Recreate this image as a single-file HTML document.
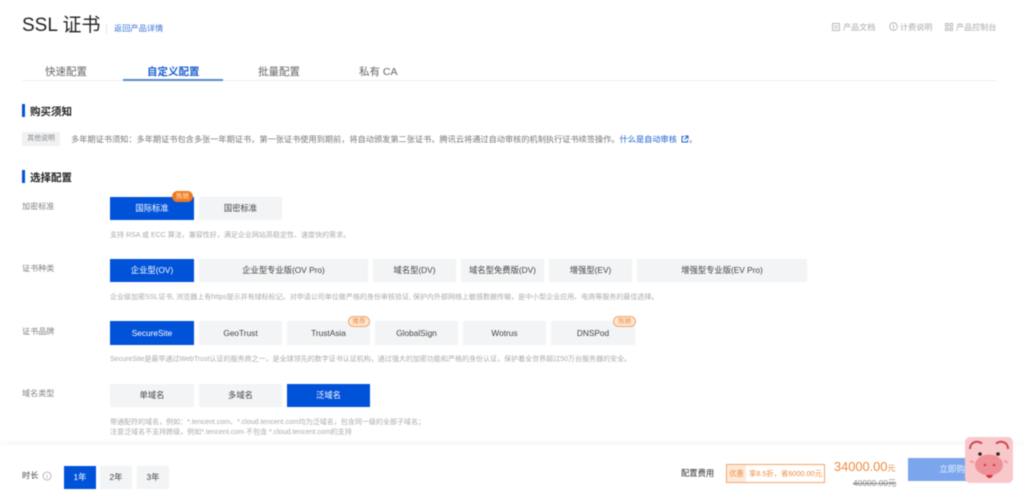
<!DOCTYPE html>
<html lang="zh"><head><meta charset="utf-8"><title>SSL 证书</title>
<style>
html,body{margin:0;padding:0;background:#fff}
#p{position:relative;width:1024px;height:495px;overflow:hidden;background:#fff;font-family:"Liberation Sans","Noto Sans CJK SC",sans-serif;color:#333}
#c{position:absolute;left:0;top:0;width:1024px;height:495px;filter:blur(.45px)}
.a{position:absolute;white-space:nowrap}
.b{position:absolute;height:23px;line-height:23px;text-align:center;background:#f2f4f5;color:#444;font-size:8.3px}
.on{background:#0052d9;color:#fff}
.l{position:absolute;left:22px;font-size:8.1px;color:#808080;white-space:nowrap;line-height:12px}
.h{position:absolute;left:110px;font-size:7.03px;color:#aaa;white-space:nowrap;line-height:10px}
.s{position:absolute;left:22px;width:2.5px;height:13px;background:#0052d9}
.t{position:absolute;left:30px;font-size:10.5px;font-weight:bold;color:#222;line-height:14px;white-space:nowrap}
.tab{position:absolute;top:65px;font-size:10.5px;color:#666;line-height:14px;white-space:nowrap}
.bd{position:absolute;width:21px;height:11px;border-radius:6px;line-height:11px;text-align:center;font-size:6.5px;box-sizing:border-box}
.top{position:absolute;top:23px;font-size:8.1px;color:#aaa;line-height:10px;white-space:nowrap}
</style></head><body><div id="p"><div id="c">
<div class="a" style="left:22px;top:13px;font-size:19px;line-height:26px;color:#222">SSL 证书</div>
<div class="a" style="left:106px;top:24px;width:1px;height:10px;background:#e8e8e8"></div>
<div class="a" style="left:114px;top:24px;font-size:8.2px;line-height:10px;color:#3a74d8">返回产品详情</div>
<svg class="a" style="left:832px;top:23px" width="8" height="8" fill="none" stroke="#aaa" stroke-width=".8"><rect x=".5" y=".5" width="7" height="7"/><path d="M2 3h4M2 5h4"/></svg>
<div class="top" style="left:843px">产品文档</div>
<svg class="a" style="left:889px;top:22px" width="9" height="9" fill="none" stroke="#aaa" stroke-width=".8"><circle cx="4.5" cy="4.5" r="3.8"/><path d="M4.5 2.5v4"/></svg>
<div class="top" style="left:900px">计费说明</div>
<svg class="a" style="left:945px;top:23px" width="8" height="8" fill="none" stroke="#aaa" stroke-width=".8"><rect x=".5" y=".5" width="2.6" height="2.6"/><rect x="4.9" y=".5" width="2.6" height="2.6"/><rect x=".5" y="4.9" width="2.6" height="2.6"/><rect x="4.9" y="4.9" width="2.6" height="2.6"/></svg>
<div class="top" style="left:956px">产品控制台</div>

<div class="tab" style="left:45px">快速配置</div>
<div class="tab" style="left:147px;color:#1a5fd0;font-weight:bold">自定义配置</div>
<div class="tab" style="left:258px">批量配置</div>
<div class="tab" style="left:359px">私有 CA</div>
<div class="a" style="left:22px;top:80px;width:975px;height:1px;background:#eceef0"></div>
<div class="a" style="left:123px;top:79px;width:100px;height:2px;background:#5b8ad0"></div>

<div class="s" style="top:104px"></div><div class="t" style="top:105px">购买须知</div>
<div class="a" style="left:22px;top:132px;width:38px;height:14px;line-height:14px;text-align:center;background:#f0f1f3;color:#888;font-size:6.9px">其他说明</div>
<div class="a" style="left:71px;top:134.500px;font-size:8.2px;line-height:10px;color:#777">多年期证书须知：多年期证书包含多张一年期证书，第一张证书使用到期前，将自动颁发第二张证书，腾讯云将通过自动审核的机制执行证书续签操作。<span style="color:#1a5fd0">什么是自动审核</span></div>
<svg class="a" style="left:681px;top:135px" width="8" height="8" fill="none" stroke="#1a5fd0" stroke-width="1"><path d="M3 1.5H1v5.500h5.500V5M4 1h3v3M7 1L3.500 4.500"/></svg>
<div class="a" style="left:689px;top:134.500px;font-size:8.2px;line-height:10px;color:#777">。</div>

<div class="s" style="top:170px"></div><div class="t" style="top:171px">选择配置</div>

<div class="l" style="top:201px">加密标准</div>
<div class="b on" style="left:110px;top:197px;width:84px">国际标准</div>
<div class="b" style="left:199px;top:197px;width:83px">国密标准</div>
<div class="bd" style="left:172px;top:191px;background:#f07a1e;color:#ffe9d4">热销</div>
<div class="h" style="top:231px">支持 RSA 或 ECC 算法，兼容性好，满足企业网站高稳定性、速度快的需求。</div>

<div class="l" style="top:263px">证书种类</div>
<div class="b on" style="left:110px;top:259px;width:84px">企业型(OV)</div>
<div class="b" style="left:199px;top:259px;width:169px">企业型专业版(OV Pro)</div>
<div class="b" style="left:373px;top:259px;width:83px">域名型(DV)</div>
<div class="b" style="left:461px;top:259px;width:83px">域名型免费版(DV)</div>
<div class="b" style="left:549px;top:259px;width:83px">增强型(EV)</div>
<div class="b" style="left:637px;top:259px;width:170px">增强型专业版(EV Pro)</div>
<div class="h" style="top:293px">企业级加密SSL证书, 浏览器上有https提示并有绿标标记。对申请公司单位做严格的身份审核验证, 保护内外部网络上敏感数据传输，是中小型企业应用、电商等服务的最佳选择。</div>

<div class="l" style="top:326px">证书品牌</div>
<div class="b on" style="left:110px;top:321px;width:84px;height:24px;line-height:24px">SecureSite</div>
<div class="b" style="left:199px;top:321px;width:83px;height:24px;line-height:24px">GeoTrust</div>
<div class="b" style="left:287px;top:321px;width:83px;height:24px;line-height:24px">TrustAsia</div>
<div class="b" style="left:375px;top:321px;width:83px;height:24px;line-height:24px">GlobalSign</div>
<div class="b" style="left:463px;top:321px;width:83px;height:24px;line-height:24px">Wotrus</div>
<div class="b" style="left:551px;top:321px;width:84px;height:24px;line-height:24px">DNSPod</div>
<div class="bd" style="left:348px;top:316px;width:22px;background:#fde6d3;border:1px solid #f3a66b;color:#ef8a3a;line-height:9px">推荐</div>
<div class="bd" style="left:613px;top:316px;width:23px;background:#fde6d3;border:1px solid #f3a66b;color:#ef8a3a;line-height:9px">热销</div>
<div class="h" style="top:355px">SecureSite是最早通过WebTrust认证的服务商之一，是全球领先的数字证书认证机构，通过强大的加密功能和严格的身份认证，保护着全世界超过50万台服务器的安全。</div>

<div class="l" style="top:388px">域名类型</div>
<div class="b" style="left:110px;top:384px;width:84px">单域名</div>
<div class="b" style="left:199px;top:384px;width:83px">多域名</div>
<div class="b on" style="left:287px;top:384px;width:83px">泛域名</div>
<div class="h" style="top:418px">带通配符的域名，例如：*.tencent.com、*.cloud.tencent.com均为泛域名，包含同一级的全部子域名；</div>
<div class="h" style="top:428px">注意泛域名不支持跨级，例如*.tencent.com 不包含 *.cloud.tencent.com的支持</div>

<div class="a" style="left:0;top:445px;width:1024px;height:50px;background:#fff;box-shadow:0 -3px 5px rgba(0,0,0,.035)"></div>
<div class="a" style="left:22px;top:470px;font-size:8.2px;line-height:12px;color:#444">时长</div>
<svg class="a" style="left:42px;top:471px" width="10" height="10" fill="none" stroke="#aaa" stroke-width=".8"><circle cx="5" cy="5" r="4"/><path d="M5 3v.7M5 4.500v2.500"/></svg>
<div class="b on" style="left:64px;top:466px;width:32px">1年</div>
<div class="b" style="left:100px;top:466px;width:32px">2年</div>
<div class="b" style="left:137px;top:466px;width:32px">3年</div>

<div class="a" style="left:681px;top:467px;font-size:8.3px;line-height:12px;color:#333">配置费用</div>
<div class="a" style="left:726px;top:464px;width:99px;height:19px;box-sizing:border-box;border:1px solid #f3a66b;font-size:7.3px;line-height:17px;color:#ef8a3a"><span style="display:inline-block;width:19px;text-align:center;background:#fdeadb">优惠</span><span style="margin-left:3px">享8.5折，省6000.00元</span></div>
<div class="a" style="left:834px;top:458px;font-size:12.8px;line-height:18px;color:#ed8a3c">34000.00<span style="font-size:8px">元</span></div>
<div class="a" style="left:853px;top:478px;font-size:8.4px;line-height:11px;color:#888;text-decoration:line-through">40000.00元</div>
<div class="a" style="left:908px;top:458px;width:97px;height:23px;line-height:23px;text-align:center;background:#7ba6ee;color:#e9f0fd;font-size:8.6px">立即购买</div>

<svg class="a" style="left:965px;top:437px" width="48" height="47" viewBox="0 0 48 47">
<rect width="48" height="46" rx="5" fill="#f8c8cb"/>
<path d="M5 12C5 5 12 3 17 6.500" fill="none" stroke="#c8494f" stroke-width="2"/>
<path d="M43 12C43 5 36 3 31 6.500" fill="none" stroke="#c8494f" stroke-width="2"/>
<circle cx="15" cy="17" r="1.800" fill="#2b2222"/><circle cx="33" cy="17" r="1.800" fill="#2b2222"/>
<ellipse cx="24" cy="28" rx="14" ry="10.500" fill="#ef9097"/>
<circle cx="20" cy="28" r="1.300" fill="#c8494f"/><circle cx="29" cy="28" r="1.300" fill="#c8494f"/>
<path d="M21 38h7c-1 4-6 4-7 0z" fill="#d8323a"/>
<path d="M5 25l2-1.500M7 26l2-1.500M39 25l2-1.500M41 26l2-1.500" stroke="#e0737a" stroke-width=".8"/>
</svg>
</div></div></body></html>
